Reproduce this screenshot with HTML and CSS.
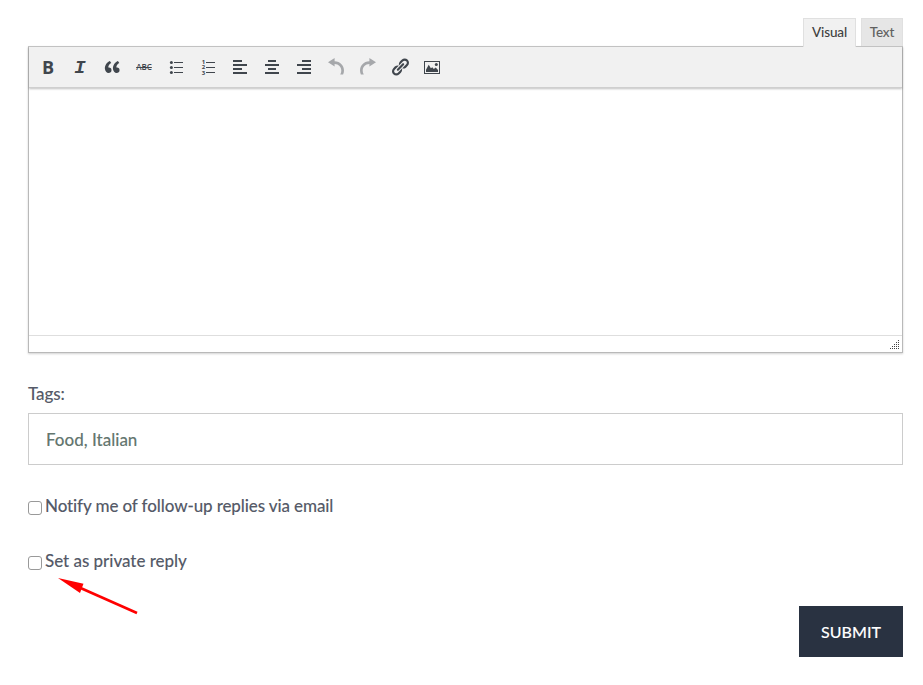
FILE: index.html
```html
<!DOCTYPE html>
<html lang="en">
<head>
<meta charset="utf-8">
<title>Reply</title>
<link rel="stylesheet" href="styles.css">
</head>
<body>
<form class="reply">
  <div class="tabs">
    <div class="tab active">Visual</div>
    <div class="tab text">Text</div>
  </div>
  <div class="editor">
    <div class="toolbar">
      <span class="tool bold">B</span>
      <span class="tool italic">I</span>
      <span class="tool"><svg viewBox="0 0 20 20"><path d="M9.49 13.22c0-.74-.2-1.38-.61-1.9-.62-.78-1.83-.88-2.53-.72-.29-1.65 1.11-3.75 2.92-4.65L7.88 4c-2.73 1.3-5.42 4.28-4.96 8.05C3.21 14.43 4.59 16 6.54 16c.85 0 1.56-.25 2.12-.75s.83-1.18.83-2.03zm8.05 0c0-.74-.2-1.38-.61-1.9-.63-.78-1.83-.88-2.53-.72-.29-1.65 1.11-3.75 2.92-4.65L15.93 4c-2.73 1.3-5.41 4.28-4.95 8.05.28 2.38 1.66 3.95 3.61 3.95.85 0 1.56-.25 2.12-.75s.83-1.18.83-2.03z"/></svg></span>
      <span class="tool strike">ABC</span>
      <span class="tool"><svg viewBox="0 0 20 20"><circle cx="5.4" cy="5.5" r="1.5"/><circle cx="5.4" cy="10.5" r="1.5"/><circle cx="5.4" cy="15.5" r="1.5"/><path d="M8 5h9v1H8zM8 10h9v1H8zM8 15h9v1H8z"/></svg></span>
      <span class="tool"><svg viewBox="0 0 20 20"><text class="digits"><tspan x="3.7" y="7.200">1</tspan><tspan x="3.7" y="12.400">2</tspan><tspan x="3.7" y="17.600">3</tspan></text><path d="M8 5h9v1H8zM8 10h9v1H8zM8 15h9v1H8z"/></svg></span>
      <span class="tool"><svg viewBox="0 0 20 20"><path d="M3 3h9v2H3zM3 7h14v2H3zM3 11h9v2H3zM3 15h14v2H3z"/></svg></span>
      <span class="tool"><svg viewBox="0 0 20 20"><path d="M6 3h8v2H6zM3 7h14v2H3zM6 11h8v2H6zM3 15h14v2H3z"/></svg></span>
      <span class="tool"><svg viewBox="0 0 20 20"><path d="M8 3h9v2H8zM3 7h14v2H3zM8 11h9v2H8zM3 15h14v2H3z"/></svg></span>
      <span class="tool disabled"><svg viewBox="0 0 20 20"><path d="M2 5.2 8.6 1v3.2c5.8.2 9.4 4.4 9.4 9.3 0 1.400-.3 2.800-.9 4.100h-2.900c.7-1.200 1.100-2.500 1.100-3.900 0-3.600-2.600-6.400-6.700-6.600V9.400z"/></svg></span>
      <span class="tool disabled"><svg viewBox="0 0 20 20"><path d="M18 5.200 11.400 1v3.200C5.600 4.400 2 8.600 2 13.500c0 1.400.3 2.800.9 4.100h2.900c-.7-1.200-1.100-2.500-1.100-3.900 0-3.600 2.600-6.400 6.700-6.600V9.400z"/></svg></span>
      <span class="tool"><svg viewBox="0 0 20 20"><path d="M17.74 2.76c1.68 1.69 1.68 4.41 0 6.1l-1.53 1.52c-1.12 1.12-2.7 1.47-4.14 1.09l2.62-2.61.76-.77.76-.76c.84-.84.84-2.2 0-3.04-.84-.85-2.2-.85-3.04 0l-.77.76-3.38 3.38c-.37-1.44-.02-3.02 1.1-4.14l1.52-1.53c1.69-1.68 4.42-1.68 6.1 0zM8.59 13.43l5.34-5.34c.42-.42.42-1.1 0-1.52-.44-.43-1.13-.39-1.53 0l-5.33 5.34c-.42.42-.42 1.1 0 1.52.44.43 1.13.39 1.52 0zm-.76 2.29l4.14-4.15c.38 1.44.03 3.02-1.09 4.14l-1.52 1.53c-1.69 1.68-4.41 1.68-6.1 0-1.68-1.68-1.68-4.42 0-6.1l1.53-1.52c1.12-1.12 2.7-1.47 4.14-1.1l-4.14 4.15c-.85.84-.85 2.2 0 3.05.84.84 2.2.84 3.04 0z"/></svg></span>
      <span class="tool"><svg viewBox="0 0 20 20"><path fill-rule="evenodd" d="M2 4h16v13H2zM3 5v11h14V5z"/><path d="M4 15v-2.200l2.700-5 2.200 3.400 1.400-1 1.500 1.700 1.900-1.400L16 13v2z"/><circle cx="14.300" cy="7.400" r="1.500"/></svg></span>
    </div>
    <div class="content"></div>
    <div class="status"><svg viewBox="0 0 9 9" class="grip"><path d="M8 0h1v1H8zM6 2h1v1H6zM8 2h1v1H8zM4 4h1v1H4zM6 4h1v1H6zM8 4h1v1H8zM2 6h1v1H2zM4 6h1v1H4zM6 6h1v1H6zM8 6h1v1H8zM0 8h1v1H0zM2 8h1v1H2zM4 8h1v1H4zM6 8h1v1H6zM8 8h1v1H8z"/></svg></div>
  </div>
  <label class="label" for="tags">Tags:</label>
  <input class="field" id="tags" type="text" value="Food, Italian">
  <label class="check"><input type="checkbox" class="box"><span class="notify">Notify me of follow-up replies via email</span></label>
  <label class="check private"><input type="checkbox" class="box"><span>Set as private reply</span>
    <svg class="arrow" viewBox="0 0 82 38"><path d="M1 1 26.500 6.700 23 16z"/><path class="shaft" d="M23 10.700 80 36"/></svg>
  </label>
  <button class="submit" type="button">SUBMIT</button>
</form>
</body>
</html>
```
FILE: styles.css
```css
* { box-sizing: border-box; }
body {
  margin: 0;
  background: #fff;
  color: #555a68;
  font-family: Lato, sans-serif;
  font-size: 17px;
  font-weight: 500;
  font-variant-ligatures: none;
  -webkit-text-stroke: .08px currentColor;
}
.reply {
  display: flex;
  flex-direction: column;
  width: 875px;
  margin: 18px 0 0 28px;
}
.tabs {
  display: flex;
  justify-content: flex-end;
  gap: 5px;
  height: 28px;
  -webkit-text-stroke: 0;
}
.tab {
  position: relative;
  z-index: 1;
  width: 42px;
  height: 28px;
  border: 1px solid #e0e0e0;
  border-bottom: 0;
  background: #e6e6e6;
  color: #606060;
  font-size: 13.5px;
  letter-spacing: -.15px;
  line-height: 27px;
  text-align: center;
}
.tab.active {
  width: 53px;
  height: 29px;
  background: #f1f1f1;
  color: #404040;
}
.editor {
  display: flex;
  flex-direction: column;
  height: 307px;
  border: 1px solid #b9b9b9;
  border-top-color: #c6c6c6;
  box-shadow: 0 1px 2px rgba(0, 0, 0, .18);
}
.toolbar {
  display: flex;
  align-items: center;
  gap: 12px;
  height: 41px;
  padding-left: 9px;
  border-bottom: 1px solid #cfcfcf;
  background: #f1f1f1;
  box-shadow: 0 1px 2px rgba(0, 0, 0, .25);
  -webkit-text-stroke: 0;
}
.tool {
  width: 20px;
  height: 20px;
  color: #40464d;
  line-height: 20px;
  text-align: center;
}
.tool svg {
  display: block;
  width: 20px;
  height: 20px;
  fill: currentColor;
}
.disabled { color: #a6a8ab; }
.bold { font: 700 18px/20px "Open Sans", sans-serif; }
.italic { font: italic 700 19px/22px "Liberation Mono", monospace; }
.strike {
  font: 600 8px/20px "Open Sans", sans-serif;
  text-decoration: line-through;
}
.digits { font: 700 6px "Open Sans", sans-serif; }
.content { flex: 1; }
.status {
  display: flex;
  justify-content: flex-end;
  align-items: flex-end;
  height: 17px;
  padding: 0 3px 3px 0;
  border-top: 1px solid #dedede;
}
.grip { width: 9px; height: 9px; fill: #444; }
.label {
  margin-top: 29px;
  height: 31px;
  line-height: 24px;
  letter-spacing: -.1px;
}
.field {
  width: 100%;
  height: 52px;
  padding: 1px 17px 0;
  border: 1px solid #ccc;
  background: #fff;
  color: #64766f;
  font: inherit;
  -webkit-text-stroke: .08px currentColor;
}
.check {
  position: relative;
  display: flex;
  align-items: center;
  height: 24px;
  margin-top: 29px;
  letter-spacing: -.03px;
}
.check span { margin-top: -2px; }
.notify { letter-spacing: -.11px; }
.box {
  appearance: none;
  flex: none;
  width: 14px;
  height: 14px;
  margin: 4px 3px 0 0;
  border: 1px solid #999;
  border-radius: 3px;
  background: #fff;
}
.private { margin-top: 31px; }
.arrow {
  position: absolute;
  left: 29px;
  top: 28px;
  width: 82px;
  height: 38px;
  fill: #f00;
}
.shaft { stroke: #f00; stroke-width: 2.6; }
.submit {
  align-self: flex-end;
  width: 104px;
  height: 51px;
  margin-top: 33px;
  padding: 0;
  border: 0;
  background: #293241;
  color: #fff;
  font: 500 16px Lato, sans-serif;
  -webkit-text-stroke: .1px currentColor;
}
```
